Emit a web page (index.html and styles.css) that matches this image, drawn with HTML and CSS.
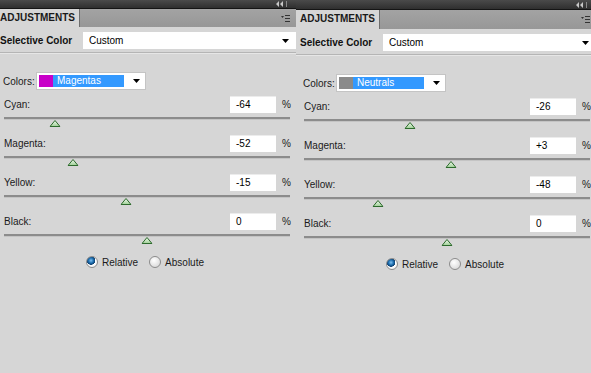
FILE: index.html
```html
<!DOCTYPE html>
<html>
<head>
  <title>Adjustments - Selective Color</title>
  <link rel="stylesheet" href="styles.css">
</head>
<body>
  <div class="panels">

    <!-- first panel: magentas -->
    <div class="panel panel-first">
      <div class="titlebar">
        <svg class="collapse" width="12" height="6" viewBox="0 0 12 6"><path d="M3 0 L0 3 L3 6 Z M7 0 L4 3 L7 6 Z" fill="#c8c8c8"/><rect x="10" y="0" width="1" height="6" fill="#8a8a8a"/></svg>
      </div>
      <div class="tabs">
        <div class="tab">ADJUSTMENTS</div>
        <svg class="menu" width="9" height="7" viewBox="0 0 9 7"><path d="M0 1 L3 1 L1.5 3 Z" fill="#333"/><rect x="4" y="0" width="5" height="1" fill="#333"/><rect x="4" y="3" width="5" height="1" fill="#333"/><rect x="4" y="6" width="5" height="1" fill="#333"/></svg>
      </div>
      <div class="preset">
        <span class="preset-name">Selective Color</span>
        <div class="select">
          <span>Custom</span>
          <svg class="arrow" width="7" height="4" viewBox="0 0 7 4"><path d="M0 0 L7 0 L3.5 4 Z" fill="#000"/></svg>
        </div>
      </div>
      <div class="colors">
        <span class="label">Colors:</span>
        <div class="color-select">
          <span class="swatch swatch-magenta"></span>
          <span class="color-name">Magentas</span>
          <svg class="arrow" width="7" height="4" viewBox="0 0 7 4"><path d="M0 0 L7 0 L3.5 4 Z" fill="#000"/></svg>
        </div>
      </div>

      <div class="slider">
        <div class="slider-head"><span class="label">Cyan:</span><span class="value">-64</span><span class="pct">%</span></div>
        <div class="track"><svg class="thumb" style="left: 18%" width="11" height="7" viewBox="0 0 11 7"><defs><linearGradient id="g1" x1="0" y1="0" x2="0" y2="1"><stop offset="0" stop-color="#eef8ec"/><stop offset="1" stop-color="#9fd096"/></linearGradient></defs><path d="M5.5 0.5 L10.5 6.5 L0.5 6.5 Z" fill="url(#g1)" stroke="#2d6b2d"/></svg></div>
      </div>
      <div class="slider">
        <div class="slider-head"><span class="label">Magenta:</span><span class="value">-52</span><span class="pct">%</span></div>
        <div class="track"><svg class="thumb" style="left: 24%" width="11" height="7" viewBox="0 0 11 7"><path d="M5.5 0.5 L10.5 6.5 L0.5 6.5 Z" fill="url(#g1)" stroke="#2d6b2d"/></svg></div>
      </div>
      <div class="slider">
        <div class="slider-head"><span class="label">Yellow:</span><span class="value">-15</span><span class="pct">%</span></div>
        <div class="track"><svg class="thumb" style="left: 42.5%" width="11" height="7" viewBox="0 0 11 7"><path d="M5.5 0.5 L10.5 6.5 L0.5 6.5 Z" fill="url(#g1)" stroke="#2d6b2d"/></svg></div>
      </div>
      <div class="slider">
        <div class="slider-head"><span class="label">Black:</span><span class="value">0</span><span class="pct">%</span></div>
        <div class="track"><svg class="thumb" style="left: 50%" width="11" height="7" viewBox="0 0 11 7"><path d="M5.5 0.5 L10.5 6.5 L0.5 6.5 Z" fill="url(#g1)" stroke="#2d6b2d"/></svg></div>
      </div>

      <div class="mode">
        <label class="radio"><span class="dot on"></span>Relative</label>
        <label class="radio"><span class="dot"></span>Absolute</label>
      </div>
    </div>

    <!-- second panel: neutrals -->
    <div class="panel panel-second">
      <div class="titlebar">
        <svg class="collapse" width="12" height="6" viewBox="0 0 12 6"><path d="M3 0 L0 3 L3 6 Z M7 0 L4 3 L7 6 Z" fill="#c8c8c8"/><rect x="10" y="0" width="1" height="6" fill="#8a8a8a"/></svg>
      </div>
      <div class="tabs">
        <div class="tab">ADJUSTMENTS</div>
        <svg class="menu" width="9" height="7" viewBox="0 0 9 7"><path d="M0 1 L3 1 L1.5 3 Z" fill="#333"/><rect x="4" y="0" width="5" height="1" fill="#333"/><rect x="4" y="3" width="5" height="1" fill="#333"/><rect x="4" y="6" width="5" height="1" fill="#333"/></svg>
      </div>
      <div class="preset">
        <span class="preset-name">Selective Color</span>
        <div class="select">
          <span>Custom</span>
          <svg class="arrow" width="7" height="4" viewBox="0 0 7 4"><path d="M0 0 L7 0 L3.5 4 Z" fill="#000"/></svg>
        </div>
      </div>
      <div class="colors">
        <span class="label">Colors:</span>
        <div class="color-select">
          <span class="swatch swatch-neutral"></span>
          <span class="color-name">Neutrals</span>
          <svg class="arrow" width="7" height="4" viewBox="0 0 7 4"><path d="M0 0 L7 0 L3.5 4 Z" fill="#000"/></svg>
        </div>
      </div>

      <div class="slider">
        <div class="slider-head"><span class="label">Cyan:</span><span class="value">-26</span><span class="pct">%</span></div>
        <div class="track"><svg class="thumb" style="left: 37%" width="11" height="7" viewBox="0 0 11 7"><path d="M5.5 0.5 L10.5 6.5 L0.5 6.5 Z" fill="url(#g1)" stroke="#2d6b2d"/></svg></div>
      </div>
      <div class="slider">
        <div class="slider-head"><span class="label">Magenta:</span><span class="value">+3</span><span class="pct">%</span></div>
        <div class="track"><svg class="thumb" style="left: 51.5%" width="11" height="7" viewBox="0 0 11 7"><path d="M5.5 0.5 L10.5 6.5 L0.5 6.5 Z" fill="url(#g1)" stroke="#2d6b2d"/></svg></div>
      </div>
      <div class="slider">
        <div class="slider-head"><span class="label">Yellow:</span><span class="value">-48</span><span class="pct">%</span></div>
        <div class="track"><svg class="thumb" style="left: 26%" width="11" height="7" viewBox="0 0 11 7"><path d="M5.5 0.5 L10.5 6.5 L0.5 6.5 Z" fill="url(#g1)" stroke="#2d6b2d"/></svg></div>
      </div>
      <div class="slider">
        <div class="slider-head"><span class="label">Black:</span><span class="value">0</span><span class="pct">%</span></div>
        <div class="track"><svg class="thumb" style="left: 50%" width="11" height="7" viewBox="0 0 11 7"><path d="M5.5 0.5 L10.5 6.5 L0.5 6.5 Z" fill="url(#g1)" stroke="#2d6b2d"/></svg></div>
      </div>

      <div class="mode">
        <label class="radio"><span class="dot on"></span>Relative</label>
        <label class="radio"><span class="dot"></span>Absolute</label>
      </div>
    </div>

  </div>
</body>
</html>
```

FILE: styles.css
```css
/* Base */

html,
body {
  margin: 0;
  padding: 0;
  width: 591px;
  height: 373px;
  overflow: hidden;
  background: #d6d6d6;
  font-family: "Liberation Sans", Arial, sans-serif;
  font-size: 10px;
  color: #000;
}

.panels {
  display: flex;
  height: 373px;
}

.panel {
  flex: 0 0 300px;
  width: 300px;
  background: #d6d6d6;
}

.panel-first {
  margin-left: -4px;
}

/* Title bar */

.titlebar {
  height: 8px;
  background: linear-gradient(#4a4a4a, #2f2f2f);
  border-bottom: 1px solid #151515;
  display: flex;
  justify-content: flex-end;
  align-items: center;
  padding-right: 8px;
}

.panel-second .titlebar {
  height: 9px;
}

/* Tabs */

.tabs {
  height: 18px;
  background: linear-gradient(#a3a3a3, #979797);
  display: flex;
  align-items: stretch;
}

.panel-second .tabs {
  height: 19px;
}

.tab {
  width: 79px;
  padding-left: 4px;
  background: #d6d6d6;
  border-right: 1px solid #6e6e6e;
  font-weight: bold;
  font-size: 10px;
  line-height: 18px;
  color: #1a1a1a;
}

.tabs .menu {
  margin-left: auto;
  margin-right: 6px;
  align-self: center;
}

/* Preset row */

.preset {
  display: flex;
  align-items: center;
  padding: 5px 0 3px 4px;
  border-bottom: 1px solid #b5b5b5;
  box-shadow: 0 1px 0 #e6e6e6;
}

.preset-name {
  width: 83px;
  font-weight: bold;
  color: #111;
}

.select {
  flex: 1;
  height: 17px;
  background: #fff;
  display: flex;
  align-items: center;
  padding: 0 7px 0 6px;
}

.select .arrow,
.color-select .arrow {
  margin-left: auto;
}

/* Colors row */

.colors {
  display: flex;
  align-items: center;
  margin-top: 19px;
  padding-left: 7px;
  height: 18px;
}

.colors .label {
  width: 33px;
  color: #1a1a1a;
}

.color-select {
  width: 101px;
  height: 16px;
  background: #fff;
  border: 1px solid #c4c4c4;
  display: flex;
  align-items: center;
  padding: 0 5px 0 2px;
}

.swatch {
  width: 14px;
  height: 12px;
}

.swatch-magenta {
  background: #c800c8;
}

.swatch-neutral {
  background: #8a8a8a;
}

.color-name {
  width: 67px;
  height: 12px;
  line-height: 12px;
  padding-left: 4px;
  background: #3399ff;
  color: #fff;
}

/* Sliders */

.slider {
  padding: 6px 6px 15px 8px;
}

.slider + .slider {
  padding-top: 0;
}

.slider-head {
  display: flex;
  align-items: center;
  height: 16px;
}

.slider-head .label {
  flex: 1;
  color: #1a1a1a;
}

.slider-head .value {
  width: 40px;
  height: 16px;
  line-height: 16px;
  padding-left: 6px;
  background: #fff;
  border-top: 1px solid #ececec;
}

.slider-head .pct {
  margin-left: 6px;
  width: 8px;
  color: #1a1a1a;
}

.track {
  position: relative;
  margin-top: 5px;
  height: 2px;
  background: #8c8c8c;
  border-bottom: 1px solid #c4c4c4;
}

.thumb {
  position: absolute;
  top: 3px;
  transform: translateX(-50%);
}

/* Mode radios */

.mode {
  display: flex;
  justify-content: center;
  gap: 11px;
  margin-top: 4px;
  padding-right: 2px;
}

.radio {
  display: flex;
  align-items: center;
  gap: 4px;
  color: #1a1a1a;
}

.dot {
  width: 10px;
  height: 10px;
  border-radius: 50%;
  border: 1px solid #8c8c8c;
  background: radial-gradient(circle at 40% 35%, #ffffff, #d0d0d0);
}

.dot.on {
  background: radial-gradient(circle at 40% 35%, #7fc0f0 0, #1e6fb0 2.5px, #0d3f6f 4px, #ffffff 4.5px, #e0e0e0 100%);
}
```
